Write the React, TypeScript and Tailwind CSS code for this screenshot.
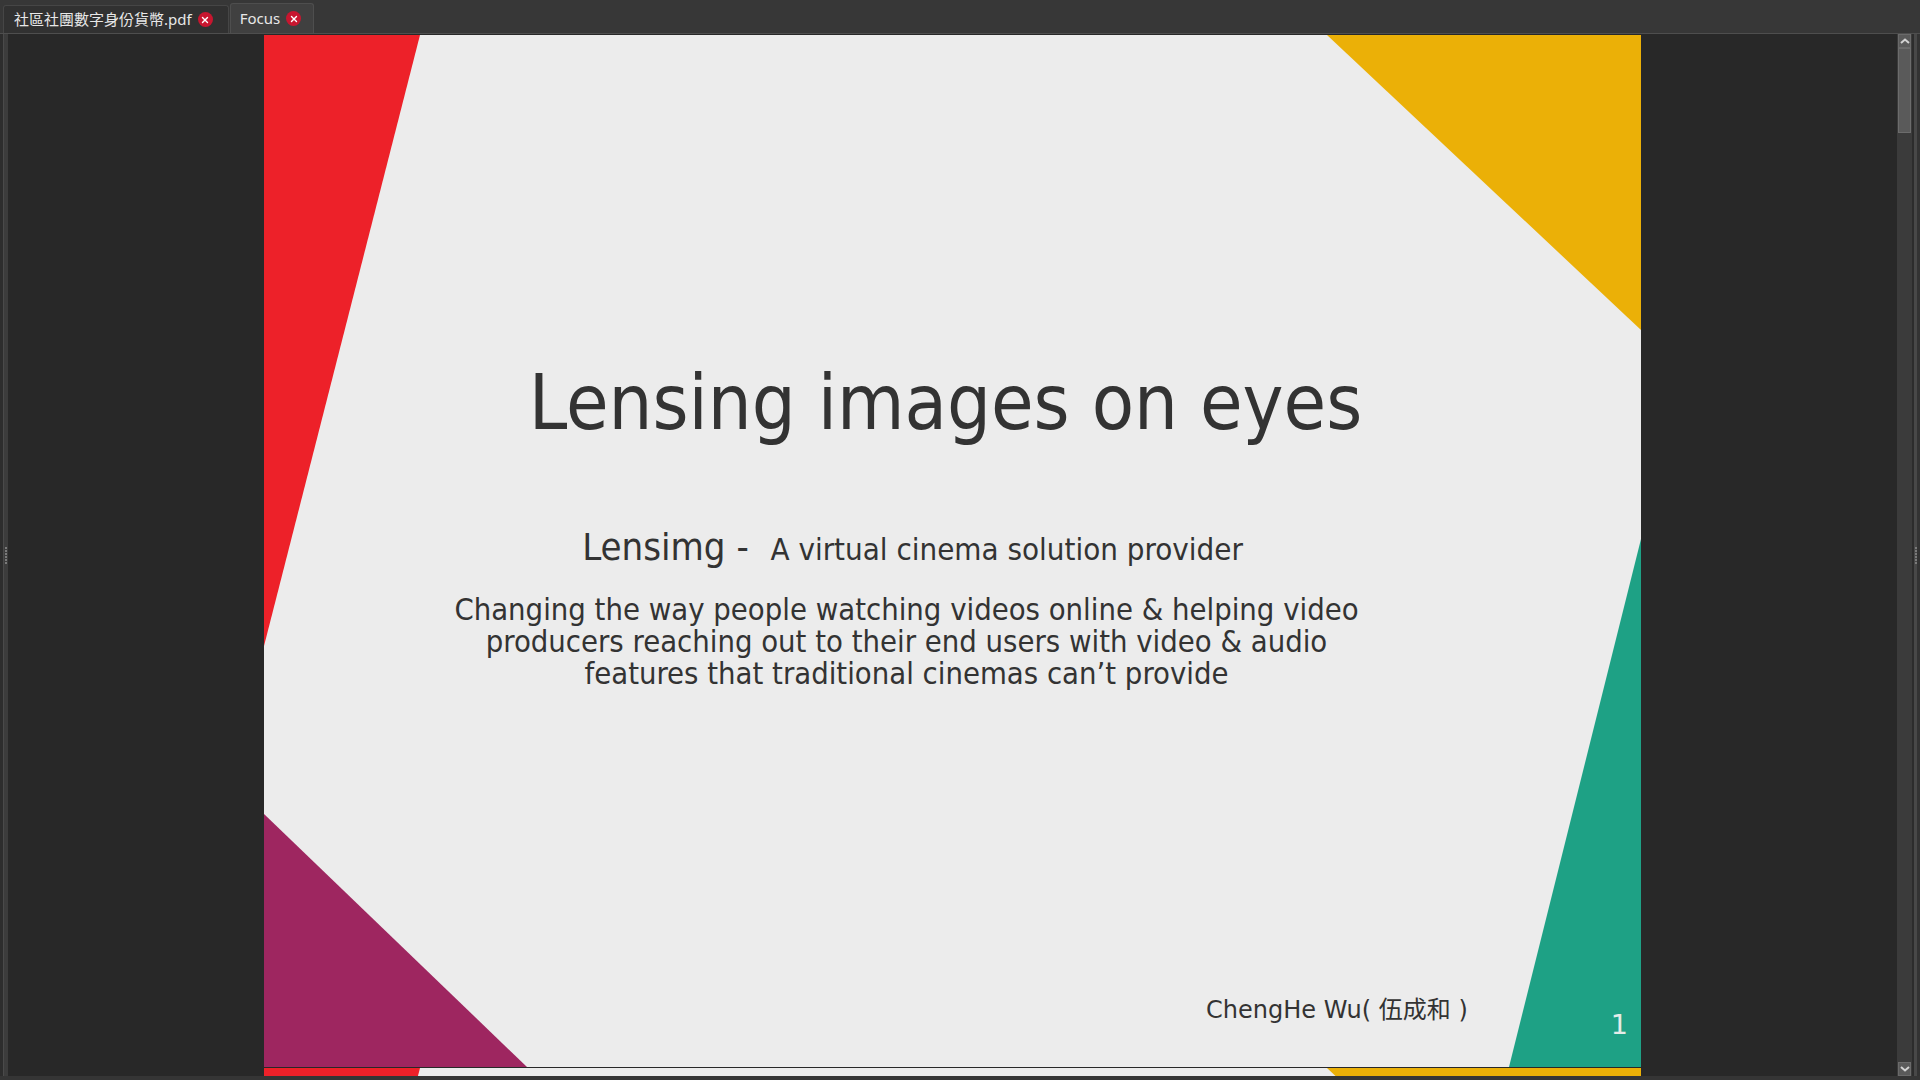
import { X } from 'lucide-react';

const condensed = "font-['DejaVu_Sans_Condensed','DejaVu_Sans',sans-serif] [font-stretch:condensed]";

function SlideShapes() {
  return (
    <svg
      className="absolute inset-0 h-full w-full"
      viewBox="0 0 1377 1032"
      preserveAspectRatio="none"
    >
      <polygon points="0,0 156,0 0,611" fill="#ed2129" />
      <polygon points="1063,0 1377,0 1377,295" fill="#ebb007" />
      <polygon points="1377,504 1377,1032 1245,1032" fill="#1ea185" />
      <polygon points="0,779 263,1032 0,1032" fill="#9e2660" />
    </svg>
  );
}

function Tab({ label, active }: { label: string; active?: boolean }) {
  return (
    <div
      className={
        active
          ? 'flex h-[30px] items-center gap-[6px] rounded-t-[3px] border border-b-0 border-[#4e4e4e] bg-[#404040] pl-[9px] pr-[12px]'
          : 'flex h-[28px] items-center gap-[6px] rounded-t-[3px] border border-b-0 border-[#464646] bg-[#313131] pl-[10px] pr-[15px]'
      }
    >
      <span className="font-['Noto_Sans','Noto_Sans_CJK_TC',sans-serif] text-[15px] leading-none text-[#e8e8e8]">
        {label}
      </span>
      <span className="flex h-[15px] w-[15px] items-center justify-center rounded-full bg-[#c8162f]">
        <X size={10} strokeWidth={3.2} color="#ffffff" />
      </span>
    </div>
  );
}

function Chevron({ up }: { up?: boolean }) {
  return (
    <svg width="10" height="6" viewBox="0 0 10 6">
      <polyline
        points={up ? '1,5 5,1.5 9,5' : '1,1 5,4.5 9,1'}
        fill="none"
        stroke="#d2d2d2"
        strokeWidth="2"
      />
    </svg>
  );
}

function Grip() {
  return (
    <div className="flex flex-col gap-[1px]">
      {[0, 1, 2, 3, 4, 5].map((i) => (
        <span key={i} className="h-[2px] w-[2px] bg-[#7a7a7a]" />
      ))}
    </div>
  );
}

export default function App() {
  return (
    <div className="flex h-[1080px] w-[1920px] flex-col overflow-hidden bg-[#353535]">
      {/* tab strip */}
      <div className="flex h-[33px] items-end gap-px bg-[#373737] pl-[3px]">
        <Tab label="社區社團數字身份貨幣.pdf" />
        <Tab label="Focus" active />
      </div>
      <div className="h-px bg-[#4e4e4e]" />

      <div className="flex h-[1042px]">
        {/* left frame */}
        <div className="flex w-[8px] bg-[#2d2d2d]">
          <div className="w-[3px]" />
          <div className="w-px bg-[#4a4a4a]" />
          <div className="flex flex-1 items-center justify-end bg-[#3c3c3c] pr-px">
            <Grip />
          </div>
        </div>

        {/* document viewport */}
        <div className="flex flex-1 flex-col items-center gap-px overflow-hidden bg-[#282828] pt-px">
          <div className="relative flex h-[1032px] w-[1377px] shrink-0 flex-col bg-[#ececec]">
            <SlideShapes />
            <div className="relative flex flex-1 flex-col text-[#333333]">
              <h1
                className={`${condensed} mt-[329px] pr-[14px] text-center text-[77px] font-normal leading-[77px]`}
              >
                Lensing images on eyes
              </h1>
              <p
                className={`${condensed} mt-[84px] pr-[80px] text-center text-[38px] leading-[44px]`}
              >
                Lensimg -&nbsp; <span className="text-[31px]">A virtual cinema solution provider</span>
              </p>
              <p
                className={`${condensed} mt-[23px] whitespace-nowrap pr-[92px] text-center text-[30.7px] leading-[32px]`}
              >
                Changing the way people watching videos online &amp; helping video
                <br />
                producers reaching out to their end users with video &amp; audio
                <br />
                features that traditional cinemas can’t provide
              </p>
              <div className="mt-auto flex items-end justify-end pb-[27px] pr-[13px]">
                <span className="mb-[15px] mr-[143px] font-['DejaVu_Sans','Noto_Sans_CJK_TC',sans-serif] text-[24px] leading-[30px] text-[#333333]">
                  ChengHe Wu( 伍成和 )
                </span>
                <span className="font-['DejaVu_Sans',sans-serif] text-[27px] leading-[30px] text-[#e4ece8]">
                  1
                </span>
              </div>
            </div>
          </div>
          <div className="relative h-[1032px] w-[1377px] shrink-0 bg-[#ececec]">
            <SlideShapes />
          </div>
        </div>

        {/* scrollbar */}
        <div className="flex w-[15px] flex-col bg-[#3b3b3b] px-px">
          <div className="flex h-[14px] items-center justify-center border border-[#6a6a6a] bg-[#5a5a5a]">
            <Chevron up />
          </div>
          <div className="h-[85px] border border-[#6c6c6c] bg-[#5a5a5a]" />
          <div className="flex-1" />
          <div className="flex h-[14px] items-center justify-center border border-[#6a6a6a] bg-[#5a5a5a]">
            <Chevron />
          </div>
        </div>

        {/* right frame */}
        <div className="flex w-[8px] bg-[#333333]">
          <div className="w-[2px] bg-[#2c2c2c]" />
          <div className="flex w-[3px] items-center justify-center bg-[#484848]">
            <Grip />
          </div>
        </div>
      </div>

      <div className="h-[4px] bg-[#353535]" />
    </div>
  );
}
